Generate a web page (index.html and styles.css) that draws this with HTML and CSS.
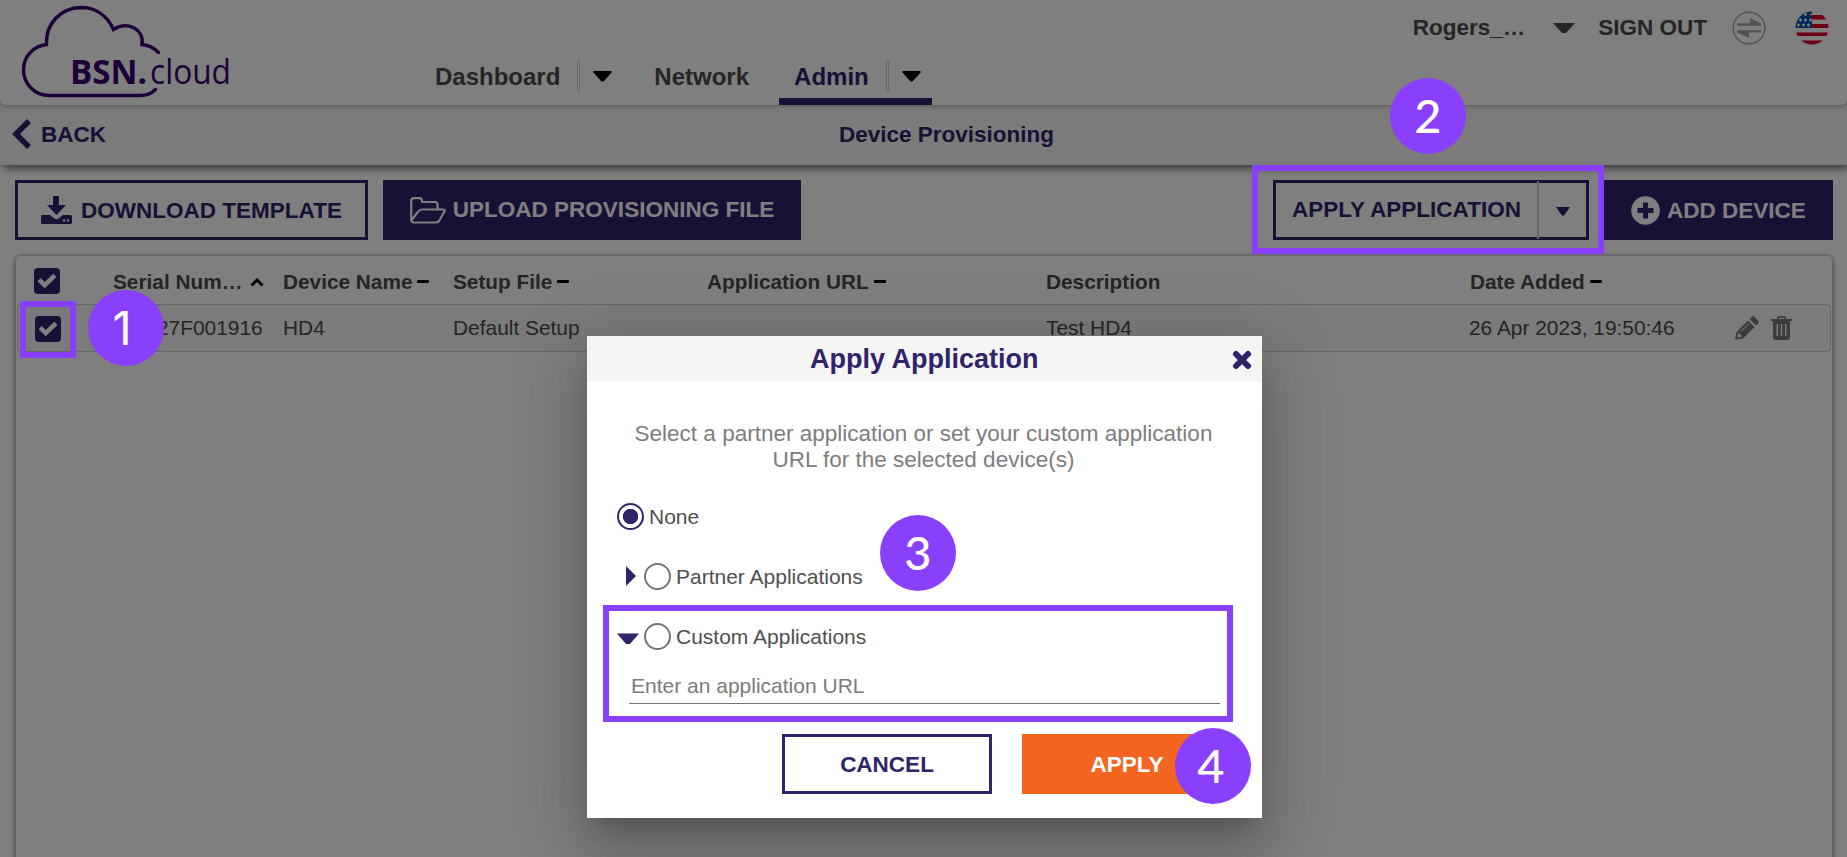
FILE: index.html
```html
<!DOCTYPE html>
<html lang="en">
<head>
<meta charset="utf-8">
<title>BSN.cloud - Device Provisioning</title>
<link rel="stylesheet" href="styles.css">
</head>
<body>
<div class="page">
  <header class="topbar">
    <svg class="logo" width="240" height="104" viewBox="0 0 240 104">
      <g class="logo-line">
        <path d="M158.500 52.500C154 48 148.500 45 142 44.500C144.500 29 127 20.500 113.500 29.500C107 15 95 7.500 81 7.500C60 8 45.500 24 46.500 44.500C33 46 23.500 57 23.500 70C23.500 84 35 95.500 49 95.500H140C146 95.500 152 93 155.500 89.500"/>
      </g>
      <text class="logo-bold" x="70" y="84" textLength="77" lengthAdjust="spacingAndGlyphs">BSN.</text>
      <text class="logo-light" x="150" y="84" textLength="81" lengthAdjust="spacingAndGlyphs">cloud</text>
    </svg>
    <nav class="nav">
      <a class="nav-item">Dashboard<i class="nav-split"></i><svg class="nav-caret" width="19" height="11" viewBox="0 0 19 11"><path d="M1 0H18L19 1L10.500 10.500H8.500L0 1Z"/></svg></a>
      <a class="nav-item plain">Network</a>
      <a class="nav-item active">Admin<i class="nav-split"></i><svg class="nav-caret" width="19" height="11" viewBox="0 0 19 11"><path d="M1 0H18L19 1L10.500 10.500H8.500L0 1Z"/></svg></a>
    </nav>
    <div class="account">
      <span class="user">Rogers_…</span>
      <svg class="user-caret" width="22" height="11" viewBox="0 0 22 11"><path d="M0 0H22L13 10H9Z"/></svg>
      <span class="signout">SIGN OUT</span>
      <svg class="swap" width="34" height="34" viewBox="0 0 34 34"><circle cx="17" cy="17" r="15.800"/><path d="M5 12.300H18V7L29 12.500V14.700H5ZM29 19.300V21.500H17V27L5.500 21.500V19.300Z"/></svg>
      <svg class="flag" width="34" height="34" viewBox="0 0 34 34">
        <clipPath id="disc"><circle cx="17" cy="17" r="16.500"/></clipPath>
        <g clip-path="url(#disc)">
          <rect width="34" height="34" fill="#fff"/>
          <path fill="#d80027" d="M17 4H34V8.500H17ZM17 13H34V17H17ZM0 21.500H34V25H0ZM0 29.500H34V34H0Z"/>
          <rect width="17" height="17" fill="#0052b4"/>
          <path class="stars" d="M9 3.500h3M15 3.500h2M4 9h3M9 9h3M14 9h3M2 14h3M7 14h3M12 14h3M10.500 2v3M5.500 7.500v3M10.500 7.500v3M15.500 7.500v3M3.500 12.500v3M8.500 12.500v3M13.500 12.500v3"/>
        </g>
      </svg>
    </div>
  </header>

  <div class="subbar">
    <a class="back"><svg width="20" height="30" viewBox="0 0 20 30"><path d="M15 0L19 4L8 15L19 26L15 30L0 15Z"/></svg><span>BACK</span></a>
    <h1 class="title">Device Provisioning</h1>
  </div>

  <div class="toolbar">
    <button class="btn outline download">
      <svg width="31" height="28" viewBox="0 0 31 28"><path fill="currentColor" d="M12 0H18V9H25L15.500 19L6 9H12ZM1.500 19H9L13.500 22.500Q15.500 24 17.500 22.500L22 19H29.500Q31 19 31 20.500V26.500Q31 28 29.500 28H1.500Q0 28 0 26.500V20.500Q0 19 1.500 19Z"/><circle cx="23" cy="24.500" r="1.200" fill="#fff"/><circle cx="27" cy="24.500" r="1.200" fill="#fff"/></svg>
      <span>DOWNLOAD TEMPLATE</span>
    </button>
    <button class="btn solid upload">
      <svg width="36" height="27" viewBox="0 0 36 27"><path class="folder" d="M1.200 23.500V4Q1.200 1.200 4 1.200H9.500Q12 1.200 12 4V5H25Q27.500 5 27.500 7.500V12M1.200 23.500Q1.700 25.500 4 25.500H26Q27.800 25.500 29 24L34.500 14.500Q35.200 12.500 33 12.500H12Q9.500 12.500 8.300 14.500Z"/></svg>
      <span>UPLOAD PROVISIONING FILE</span>
    </button>
    <div class="spacer"></div>
    <button class="btn outline apply-app">
      <span class="apply-label">APPLY APPLICATION</span>
      <span class="apply-caret"><svg width="14" height="9" viewBox="0 0 14 9"><path fill="currentColor" d="M0 0H14L8 8.500H6Z"/></svg></span>
    </button>
    <button class="btn solid add">
      <svg width="29" height="29" viewBox="0 0 29 29"><circle cx="14.500" cy="14.500" r="14.300" fill="#fff"/><path fill="#30236a" d="M12 6.500H17V12H22.500V17H17V22.500H12V17H6.500V12H12Z"/></svg>
      <span>ADD DEVICE</span>
    </button>
  </div>

  <main class="table">
    <div class="row head">
      <div class="cell"><svg width="26" height="26" viewBox="0 0 26 26"><rect width="26" height="26" rx="4" fill="#30236a"/><path fill="#fff" d="M3.500 13.300L6.700 10L10.700 14L19.300 5.800L22.500 9L10.700 20.200Z"/></svg></div>
      <div class="cell serial-head">Serial Num…<svg class="asc" width="14" height="9" viewBox="0 0 14 9"><path d="M1.500 7.500L7 2L12.500 7.500"/></svg></div>
      <div class="cell">Device Name<i class="dash"></i></div>
      <div class="cell">Setup File<i class="dash"></i></div>
      <div class="cell">Application URL<i class="dash"></i></div>
      <div class="cell">Description</div>
      <div class="cell">Date Added<i class="dash"></i></div>
      <div class="cell"></div>
    </div>
    <div class="row item">
      <div class="cell"><svg width="26" height="26" viewBox="0 0 26 26"><rect width="26" height="26" rx="4" fill="#30236a"/><path fill="#fff" d="M3.500 13.300L6.700 10L10.700 14L19.300 5.800L22.500 9L10.700 20.200Z"/></svg></div>
      <div class="cell serial">27F001916</div>
      <div class="cell">HD4</div>
      <div class="cell">Default Setup</div>
      <div class="cell"></div>
      <div class="cell">Test HD4</div>
      <div class="cell date">26 Apr 2023, 19:50:46</div>
      <div class="cell tools">
        <svg width="24" height="24" viewBox="0 0 24 24"><path fill="#777" fill-rule="evenodd" d="M0 23.500L1.500 16L13 4.500L19.500 11L8 22.500ZM3.200 17.500L2.500 20.500L3.700 21.700L6.500 20.800V19H5V17.500ZM5.500 15.500L13.500 7.500L14 8L6 16ZM14.500 3L16.500 1Q18 -.4 19.500 1L23 4.500Q24.300 6 23 7.500L21 9.500Z"/></svg>
        <svg width="21" height="24" viewBox="0 0 21 24"><path fill="#777" fill-rule="evenodd" d="M7 0H14L15.500 3H21V5H19V21.500Q18.500 24 16.500 24H4.500Q2.500 24 2 21.500V5H0V3H5.500ZM8 1.800L7.400 3H13.600L13 1.800ZM5.500 8V20H7V8ZM9.800 8V20H11.200V8ZM14 8V20H15.500V8Z"/></svg>
      </div>
    </div>
  </main>
</div>

<div class="backdrop">
  <section class="modal">
    <div class="modal-head">
      <h2>Apply Application</h2>
      <svg class="close" width="20" height="20" viewBox="0 0 20 20"><path d="M4 4L16 16M16 4L4 16"/></svg>
    </div>
    <p class="intro">Select a partner application or set your custom application URL for the selected device(s)</p>
    <div class="option none"><i class="radio checked"></i><span>None</span></div>
    <div class="option nested"><svg class="arrow" width="22" height="20" viewBox="0 0 22 20"><path d="M9 0L19 10L9 20Z"/></svg><i class="radio"></i><span>Partner Applications</span></div>
    <div class="option nested"><svg class="arrow" width="22" height="20" viewBox="0 0 22 20"><path d="M0 7.500H22L13 18H9Z"/></svg><i class="radio"></i><span>Custom Applications</span></div>
    <div class="url">Enter an application URL</div>
    <div class="actions">
      <button class="btn outline cancel"><span>CANCEL</span></button>
      <button class="btn apply"><span>APPLY</span></button>
    </div>
  </section>
</div>

<div class="frame frame-1"></div>
<div class="frame frame-2"></div>
<div class="frame frame-3"></div>
<div class="badge badge-1">1</div>
<div class="badge badge-2">2</div>
<div class="badge badge-3">3</div>
<div class="badge badge-4">4</div>
</body>
</html>
```
FILE: styles.css
```css
* { box-sizing: border-box; }

body {
  margin: 0;
  width: 1847px;
  height: 857px;
  overflow: hidden;
  position: relative;
  background: #fff;
  font-family: "Liberation Sans", Arial, sans-serif;
  color: #4a4a4a;
}

svg { display: block; flex: none; }
h1, h2, p { margin: 0; }

.page { height: 857px; display: flex; flex-direction: column; }

/* Top bar */
.topbar {
  height: 105px;
  flex: none;
  display: flex;
  position: relative;
  z-index: 2;
  background: #fff;
  border-radius: 0 0 6px 6px;
  box-shadow: 0 1px 5px rgba(0, 0, 0, .3);
}
.logo { width: 240px; }
.logo-line { fill: none; stroke: #38006e; stroke-width: 3.4; stroke-linecap: round; }
.logo-bold { font: 700 34px "Open Sans", sans-serif; fill: #38006e; }
.logo-light { font: 400 34px "Open Sans", sans-serif; fill: #38006e; }

.nav { display: flex; align-items: flex-end; margin-left: 180px; }
.nav-item {
  display: flex;
  align-items: center;
  height: 60px;
  padding: 10px 12px 0 15px;
  margin-right: 15px;
  border-bottom: 7px solid transparent;
  font-weight: 700;
  font-size: 24px;
}
.nav-item.plain { padding: 10px 15px 0; }
.nav-item.active { color: #30236a; border-bottom-color: #30236a; padding-right: 11px; }
.nav-split { width: 3px; height: 30px; border: 1px solid #d2d2d2; margin: -2px 13px 0 17px; }

.account { display: flex; align-items: center; height: 54px; margin-left: auto; font-weight: 700; font-size: 22.500px; }
.user, .signout { padding-top: 2px; }
.user-caret { margin: 2px 23px 0 28px; fill: #4a4a4a; }
.swap { margin: 1px 29px 0 25px; fill: #a5a5a5; }
.swap circle { fill: none; stroke: #a5a5a5; stroke-width: 1.500; }
.flag { margin: 1px 18px 0 0; }
.stars { stroke: #fff; stroke-width: 1.300; }

/* Title bar */
.subbar {
  height: 60px;
  flex: none;
  display: flex;
  align-items: center;
  position: relative;
  z-index: 1;
  padding: 0 0 1px 12px;
  background: #f6f6f6;
  color: #30236a;
  box-shadow: 3px 3px 8px rgba(0, 0, 0, .6);
}
.back { display: flex; align-items: center; gap: 9px; width: 827px; font-weight: 700; font-size: 22.500px; }
.back svg { fill: #30236a; margin-top: -1px; }
.title { font-size: 22.500px; }

/* Toolbar */
.toolbar { display: flex; padding: 15px 14px 15px 15px; gap: 15px; }
.spacer { flex: 1; }
.btn {
  height: 60px;
  display: flex;
  align-items: center;
  justify-content: center;
  gap: 9px;
  padding: 0;
  border: 3px solid #30236a;
  border-radius: 0;
  background: #fff;
  color: #30236a;
  font: 700 22.500px "Liberation Sans", Arial, sans-serif;
  white-space: nowrap;
}
.btn span { padding-top: 2px; }
.btn.solid { background: #30236a; color: #fff; }
.download { width: 353px; }
.upload { width: 418px; gap: 7px; }
.btn.upload span { padding-top: 0; }
.folder { fill: none; stroke: #fff; stroke-width: 2.200; stroke-linejoin: round; }
.apply-app { width: 316px; gap: 0; justify-content: flex-start; }
.btn .apply-label { width: 261px; padding-top: 0; text-align: center; }
.btn .apply-caret { flex: 1; height: 58px; display: flex; align-items: center; justify-content: center; border-left: 2px solid #ccc; }
.add { width: 229px; gap: 7px; }

/* Device table */
.table {
  flex: 1;
  margin: 0 14px -10px 15px;
  border: 1px solid #ccc;
  border-radius: 5px 5px 0 0;
  box-shadow: 0 1px 4px rgba(0, 0, 0, .5);
}
.row {
  display: grid;
  grid-template-columns: 95px 170px 170px 254px 339px 424px 265px 1fr;
  align-items: center;
  font-size: 20.900px;
  height: 48px;
}
.head { padding: 3px 0 0 2px; font-weight: 700; font-size: 20.800px; }
.head .cell:first-child svg { margin-top: -1px; }
.cell { display: flex; align-items: center; padding-left: 0; white-space: nowrap; }
.cell:first-child { padding-left: 16px; }
.row.item { border: 1px solid #ccc; border-radius: 4px; background: #f6f6f6; margin: 0 1px; }
.item .cell:first-child { padding-left: 17px; padding-top: 2px; }
.serial { padding-left: 44px; }
.dash { width: 12px; height: 3px; margin: -1px 0 0 5px; background: #000; border-radius: 1px; }
.asc { margin: 1px 0 0 8px; fill: none; stroke: #000; stroke-width: 3; }
.date { margin-left: -1px; }
.tools { gap: 12px; }

/* Dialog */
.backdrop {
  position: absolute;
  inset: 0;
  display: flex;
  align-items: flex-start;
  padding: 336px 0 0 587px;
  background: rgba(0, 0, 0, .5);
  z-index: 5;
}
.modal {
  width: 675px;
  height: 482px;
  background: #fff;
  box-shadow: 0 16px 22px -10px rgba(0, 0, 0, .2), 0 36px 57px 4px rgba(0, 0, 0, .14), 0 13px 69px 12px rgba(0, 0, 0, .12);
}
.modal-head { height: 46px; display: flex; align-items: center; padding: 0 10px 0 223px; background: #f5f5f5; }
.modal-head h2 { flex: 1; font-size: 27px; line-height: 30px; color: #30236a; }
.close { margin-top: 1px; }
.close path { stroke: #30236a; stroke-width: 6; stroke-linecap: round; }
.intro { padding: 39px 41px 0 39px; font-size: 22.500px; line-height: 26px; text-align: center; color: #7d7d7d; }
.option { display: flex; align-items: center; height: 60px; padding-left: 30px; font-size: 21px; color: #4f4f4f; }
.option span { padding-top: 1px; }
.option.none { margin-top: 13px; }
.radio { width: 27px; height: 27px; margin-right: 5px; border: 2px solid #757575; border-radius: 50%; }
.radio.checked { border-color: #30236a; background: radial-gradient(circle, #30236a 7.300px, #fff 8px); }
.arrow { margin-right: 5px; fill: #30236a; }
.url { width: 591px; height: 38px; margin: 0 0 0 42px; padding: 8px 0 0 2px; border-bottom: 1px solid #757575; font-size: 21px; line-height: 24px; color: #7b7b7b; }
.actions { display: flex; justify-content: flex-end; gap: 30px; margin: 30px 30px 0 0; }
.cancel, .apply { width: 210px; }
.apply { background: #f56522; border-color: #f56522; color: #fff; }

/* Numbered call-outs over the page */
.frame { position: absolute; z-index: 6; border: 6px solid #8a3ffc; }
.frame-1 { left: 20px; top: 301px; width: 56px; height: 57px; }
.frame-2 { left: 1252px; top: 165px; width: 352px; height: 89px; }
.frame-3 { left: 603px; top: 605px; width: 630px; height: 117px; }
.badge {
  position: absolute;
  z-index: 7;
  width: 76px;
  height: 76px;
  border-radius: 50%;
  background: #8a3ffc;
  color: #fff;
  font: 500 47px/75px Lato, sans-serif;
  text-align: center;
}
.badge-1 { left: 88px; top: 290px; font-family: Inter, sans-serif; font-weight: 400; padding-right: 8px; }
.badge-2 { left: 1390px; top: 78px; }
.badge-3 { left: 880px; top: 515px; }
.badge-4 { left: 1175px; top: 728px; padding-right: 4px; }
```
